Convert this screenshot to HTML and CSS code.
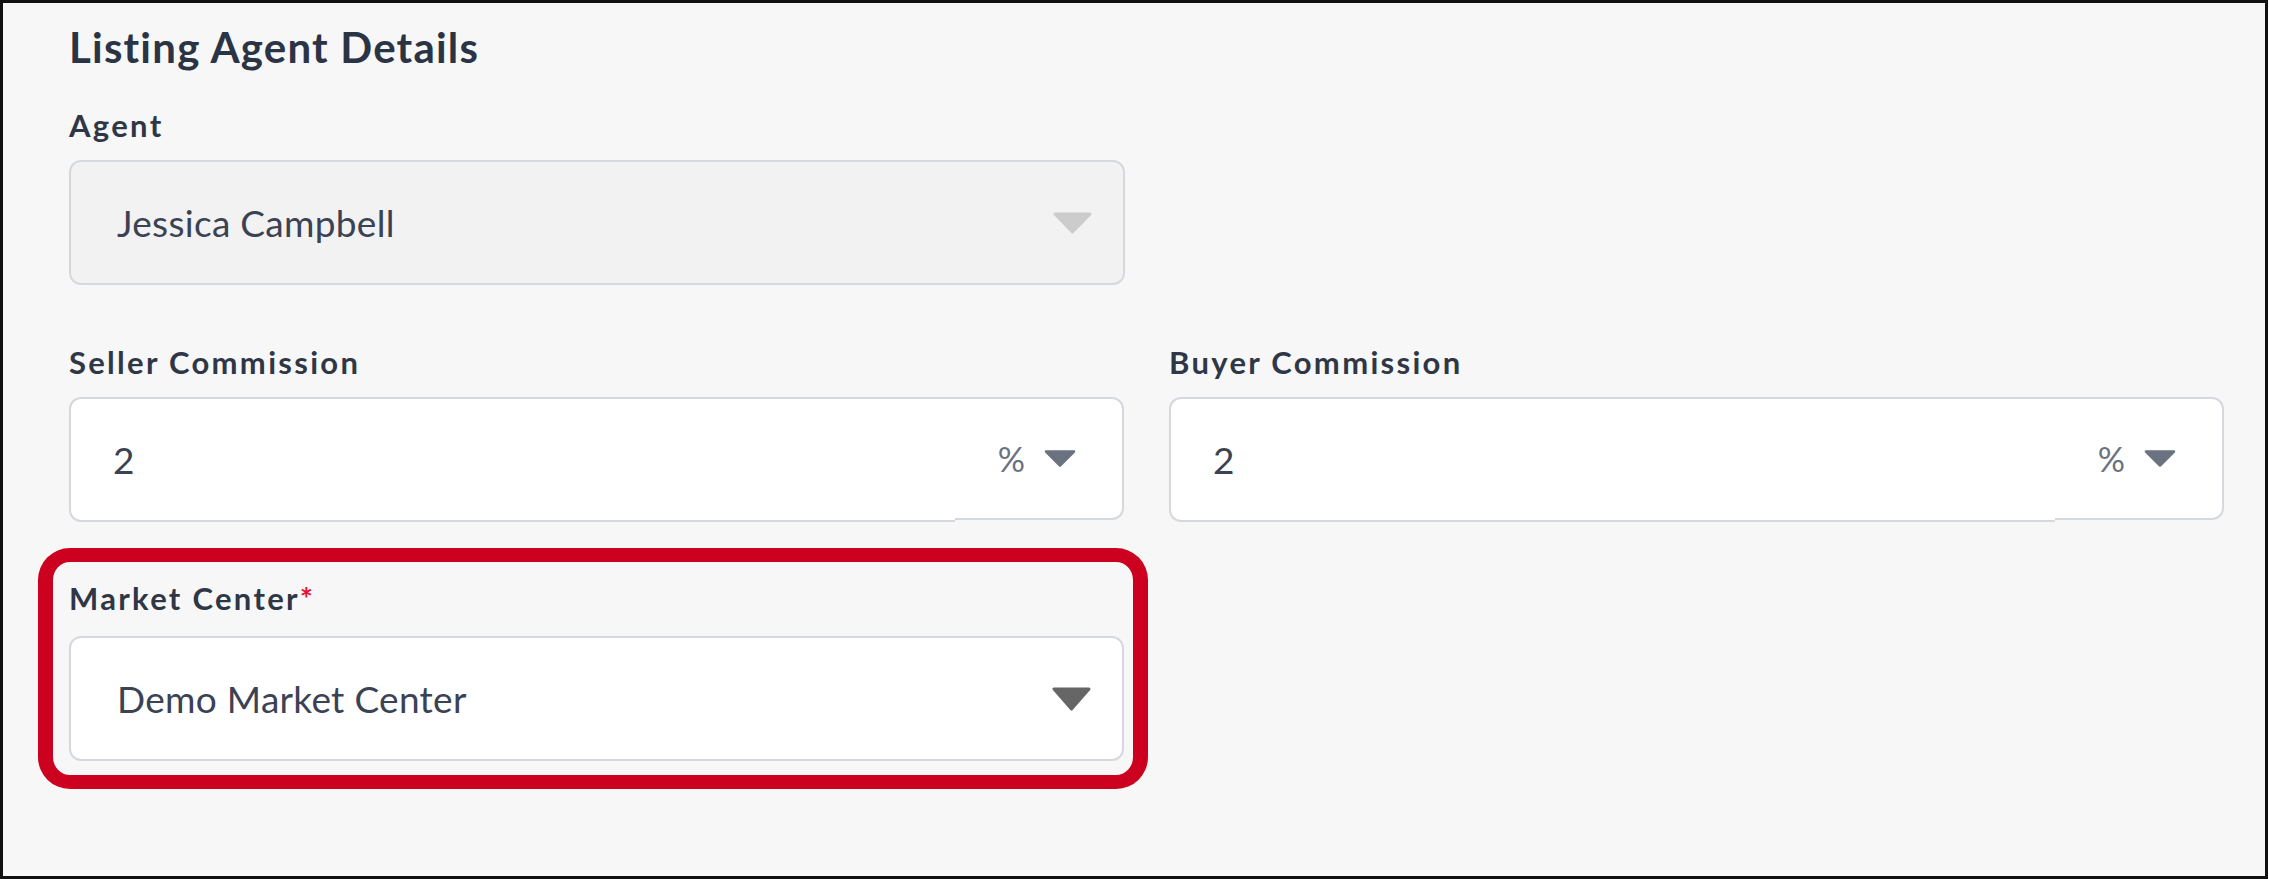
FILE: index.html
```html
<!DOCTYPE html>
<html lang="en">
<head>
<meta charset="utf-8">
<title>Listing Agent Details</title>
<link rel="stylesheet" href="styles.css">
</head>
<body>
<div class="frame">
  <h2 class="heading">Listing Agent Details</h2>

  <div class="field agent-field">
    <label class="label">Agent</label>
    <div class="select disabled">
      <span class="value">Jessica Campbell</span>
      <svg class="caret caret-lg" viewBox="0 0 41 22" width="41" height="22"><path d="M3 2 L38 2 L20.5 20 Z" fill="#cccccc" stroke="#cccccc" stroke-width="3" stroke-linejoin="round"/></svg>
    </div>
  </div>

  <div class="row">
    <div class="field">
      <label class="label">Seller Commission</label>
      <div class="split">
        <div class="split-input"><span class="value">2</span></div>
        <div class="split-addon">
          <span class="unit">%</span>
          <svg class="caret" viewBox="0 0 32 17" width="32" height="17"><path d="M2 1.5 L30 1.5 L16 15.5 Z" fill="#6b7280" stroke="#6b7280" stroke-width="2.5" stroke-linejoin="round"/></svg>
        </div>
      </div>
    </div>
    <div class="field">
      <label class="label">Buyer Commission</label>
      <div class="split">
        <div class="split-input"><span class="value">2</span></div>
        <div class="split-addon">
          <span class="unit">%</span>
          <svg class="caret" viewBox="0 0 32 17" width="32" height="17"><path d="M2 1.5 L30 1.5 L16 15.5 Z" fill="#6b7280" stroke="#6b7280" stroke-width="2.5" stroke-linejoin="round"/></svg>
        </div>
      </div>
    </div>
  </div>

  <div class="highlight">
    <div class="field">
      <label class="label">Market Center<span class="req">*</span></label>
      <div class="select">
        <span class="value">Demo Market Center</span>
        <svg class="caret caret-lg" viewBox="0 0 41 24" width="41" height="24"><path d="M3 2 L38 2 L20.5 22 Z" fill="#666666" stroke="#666666" stroke-width="3" stroke-linejoin="round"/></svg>
      </div>
    </div>
  </div>
</div>
</body>
</html>
```

FILE: styles.css
```css
* { box-sizing: border-box; }

html, body {
  margin: 0;
  padding: 0;
  background: #ffffff;
}

body {
  font-family: "Lato", "Noto Sans", "Liberation Sans", sans-serif;
  color: #2f3747;
}

.frame {
  width: 2268px;
  height: 879px;
  border: 3px solid #111111;
  background: #f7f7f7;
  padding: 19px 41px 0 66px;
  overflow: hidden;
}

.heading {
  margin: 0;
  font-size: 42px;
  line-height: 50px;
  font-weight: 700;
  letter-spacing: 1.2px;
  color: #2b3445;
}

.field {
  display: flex;
  flex-direction: column;
}

.agent-field {
  width: 1056px;
  margin-top: 33px;
}

.label {
  display: block;
  font-size: 31px;
  line-height: 40px;
  font-weight: 700;
  letter-spacing: 2.3px;
  color: #2f3747;
  margin-bottom: 15px;
}

.req {
  color: #e8112d;
  letter-spacing: 0;
}

.select {
  height: 125px;
  border: 2px solid #d5d9de;
  border-radius: 12px;
  background: #ffffff;
  display: flex;
  align-items: center;
  justify-content: space-between;
  padding: 0 30px 0 46px;
}

.select.disabled {
  background: #f2f2f2;
}

.value {
  font-size: 37px;
  color: #3b4253;
  font-weight: 400;
  letter-spacing: 0.3px;
}

.caret {
  display: block;
  flex: none;
}

.row {
  display: grid;
  grid-template-columns: 1055px 1055px;
  column-gap: 45px;
  margin-top: 57px;
}

.split {
  display: flex;
  align-items: flex-start;
}

.split-input {
  flex: 1;
  height: 125px;
  border: 2px solid #d5d9de;
  border-right: 0;
  border-radius: 12px 0 0 12px;
  background: #ffffff;
  display: flex;
  align-items: center;
  padding-left: 42px;
}

.split-addon {
  width: 169px;
  height: 123px;
  border: 2px solid #d5d9de;
  border-left: 0;
  border-radius: 0 12px 12px 0;
  background: #ffffff;
  display: flex;
  align-items: center;
  justify-content: flex-end;
  gap: 19px;
  padding-right: 46px;
}

.unit {
  font-size: 34px;
  color: #6b7280;
}

.highlight {
  width: 1110px;
  margin-top: 26px;
  margin-left: -31px;
  border: 15px solid #cc001f;
  border-top-width: 14px;
  border-bottom-width: 14px;
  border-radius: 32px;
  padding: 16px 9px 14px 16px;
}

.highlight .label {
  margin-bottom: 18px;
}
```
